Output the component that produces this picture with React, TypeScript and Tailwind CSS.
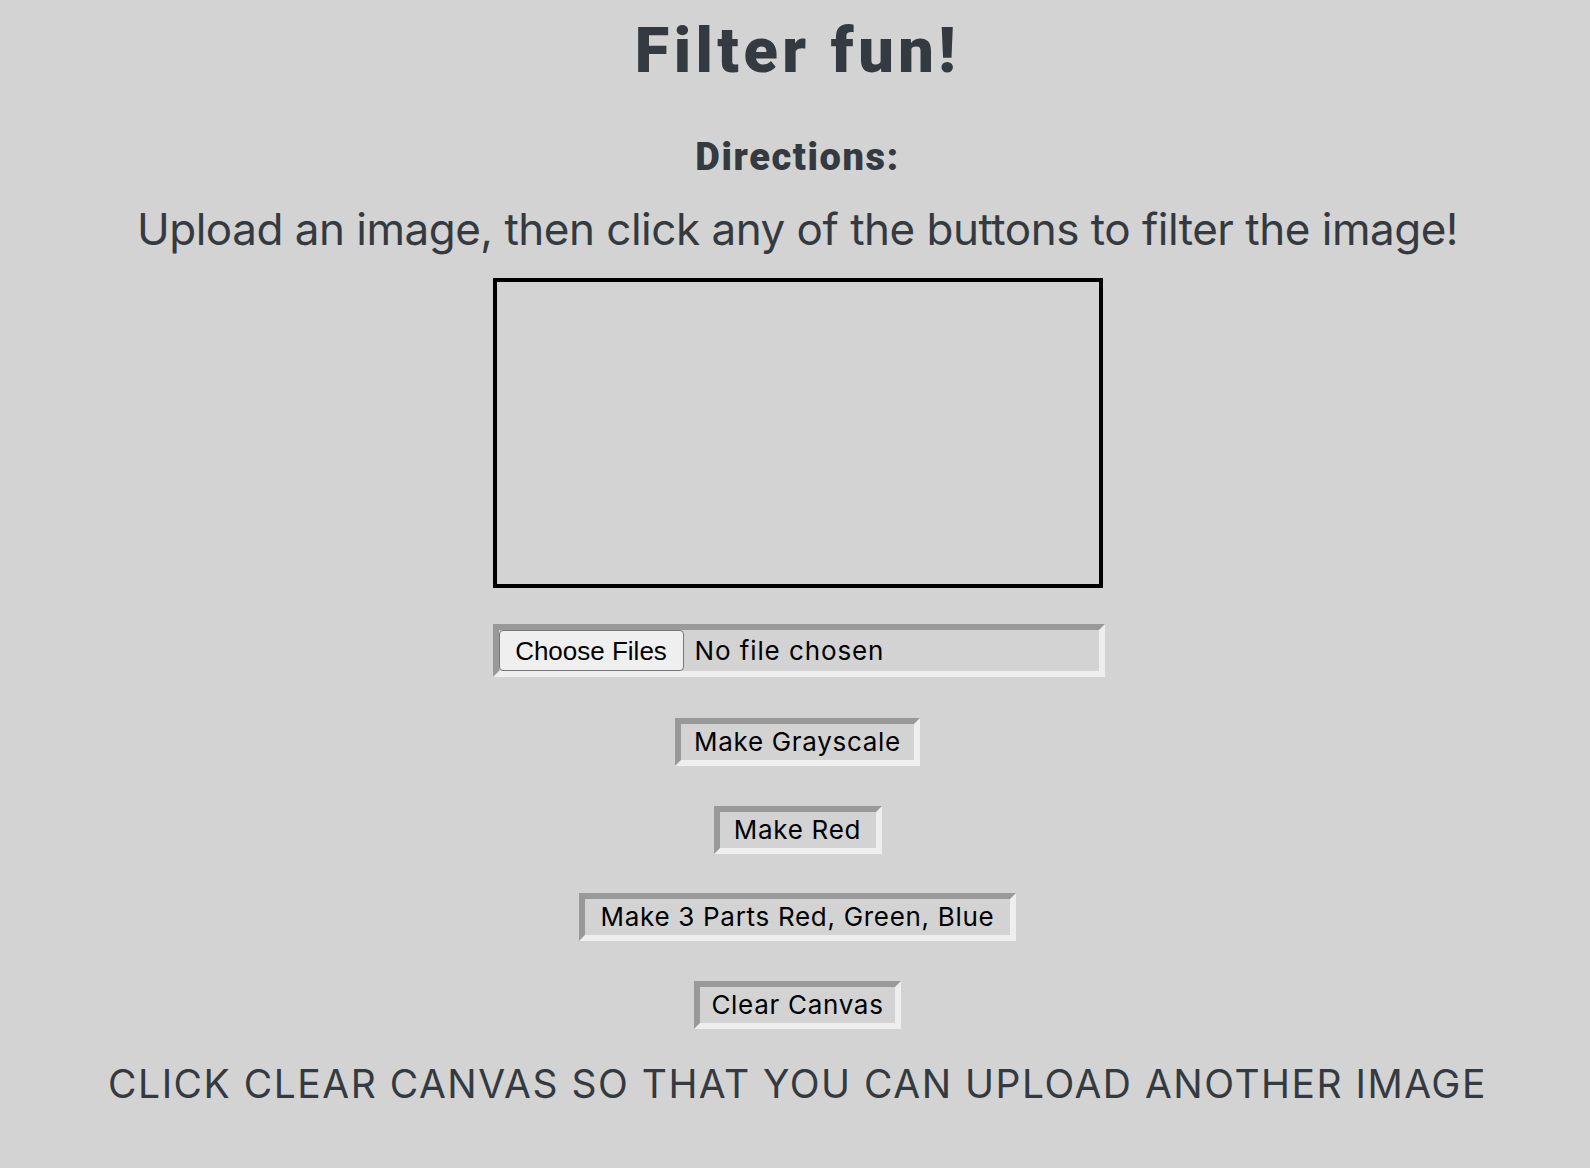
import React from "react";

const body = "font-['Inter','Noto_Sans',sans-serif]";

function Bevel({ w, label }: { w: string; label: string }) {
  return (
    <button
      type="button"
      className={`${w} h-[48px] flex items-center justify-center border-[6px] border-solid border-t-[#999999] border-l-[#999999] border-b-[#eeeeee] border-r-[#eeeeee] bg-[#d3d3d3] text-[26px] leading-none text-black tracking-[0.7px] ${body}`}
    >
      {label}
    </button>
  );
}

export default function App() {
  return (
    <div className="min-h-[1168px] w-full bg-[#d3d3d3] text-[#343a40] flex flex-col items-center pl-[5px]">
      <h1 className="pt-[19px] text-[63px] leading-none font-black tracking-[4.5px] font-['Roboto',sans-serif]">
        Filter fun!
      </h1>
      <h2 className="mt-[56px] text-[38px] leading-none font-black tracking-[1.6px] font-['Roboto',sans-serif]">
        Directions:
      </h2>
      <p className={`mt-[31px] text-[44px] leading-none ${body} tracking-[-0.5px]`}>
        Upload an image, then click any of the buttons to filter the image!
      </p>
      <div className="mt-[27px] w-[610px] h-[310px] border-4 border-black" />
      <div className="mt-[36px] ml-[2px] w-[612px] h-[53px] flex items-center border-[6px] border-solid border-t-[#999999] border-l-[#999999] border-b-[#eeeeee] border-r-[#eeeeee] bg-[#d3d3d3]">
        <button
          type="button"
          className="h-full w-[185px] rounded-[4px] border border-[#767676] bg-[#efefef] text-black text-[26px] leading-none font-['Liberation_Sans',Arial,sans-serif]"
        >
          Choose Files
        </button>
        <span className={`ml-[11px] text-[26px] leading-none text-black tracking-[0.9px] ${body}`}>
          No file chosen
        </span>
      </div>
      <div className="mt-[41px]">
        <Bevel w="w-[245px]" label="Make Grayscale" />
      </div>
      <div className="mt-[40px]">
        <Bevel w="w-[168px]" label="Make Red" />
      </div>
      <div className="mt-[39px]">
        <Bevel w="w-[437px]" label="Make 3 Parts Red, Green, Blue" />
      </div>
      <div className="mt-[40px]">
        <Bevel w="w-[207px]" label="Clear Canvas" />
      </div>
      <p className={`mt-[35px] text-[39px] leading-none ${body} tracking-[1.5px]`}>
        CLICK CLEAR CANVAS SO THAT YOU CAN UPLOAD ANOTHER IMAGE
      </p>
    </div>
  );
}
